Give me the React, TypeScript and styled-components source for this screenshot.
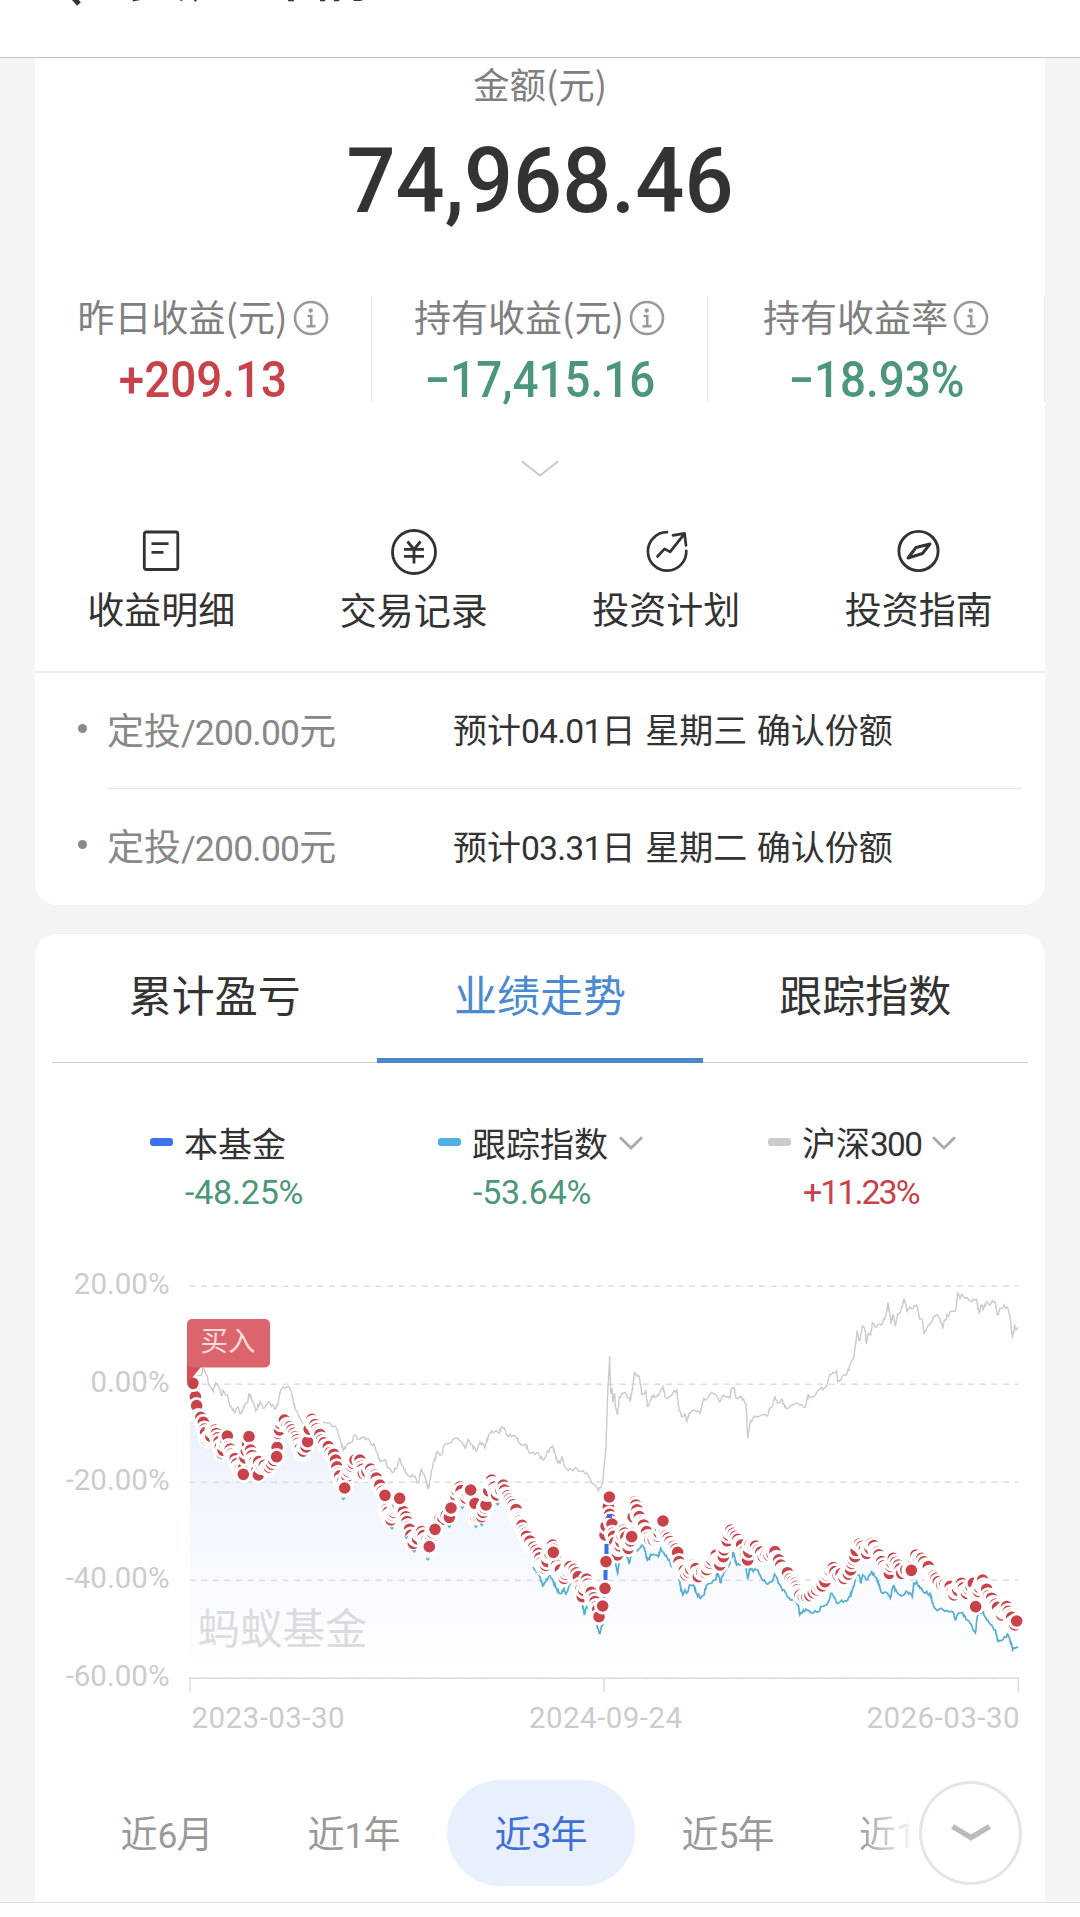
import React from "react";
import styled, { createGlobalStyle, css } from "styled-components";

const GlobalStyle = createGlobalStyle`
  * { box-sizing: border-box; }
  body {
    margin: 0;
    background: #f4f4f4;
    color: #333;
    font-family: "Noto Sans CJK SC", "Noto Sans", sans-serif;
  }
`;

const RED = "#c8424a";
const GREEN = "#4c9679";

const Page = styled.div`
  width: 1080px;
  height: 1917px;
  display: flex;
  flex-direction: column;
  overflow: hidden;
  background: #f4f4f4;
`;

const Header = styled.header`
  height: 58px;
  flex: none;
  display: flex;
  align-items: flex-start;
  gap: 46px;
  padding-left: 54px;
  background: #fff;
  border-bottom: 1px solid #c4c4c4;
  overflow: hidden;
`;

const BackIcon = styled.svg`
  width: 28px;
  height: 52px;
  margin-top: -46px;
`;

const Title = styled.h1`
  margin: -62px 0 0;
  font-size: 61px;
  line-height: 64px;
  font-weight: 500;
`;

const Card = styled.section<{ $part: "top" | "bottom" }>`
  margin: 0 35px;
  background: #fff;
  flex: none;
  display: flex;
  flex-direction: column;
  ${(p) =>
    p.$part === "top"
      ? css`height: 847px; border-radius: 0 0 22px 22px;`
      : css`height: 968px; margin-top: 29px; border-radius: 22px 22px 0 0;`}
`;

const Num = styled.span<{ $scale?: number; $gap?: number }>`
  font-family: Roboto, "Liberation Sans", sans-serif;
  font-size: ${(p) => p.$scale ?? 0.96}em;
  letter-spacing: ${(p) => p.$gap ?? -0.8}px;
`;

const Caption = styled.div`
  height: 54px;
  text-align: center;
  color: #7f7f7f;
  font-size: 36.5px;
  line-height: 52px;
`;

const Amount = styled.div`
  height: 184px;
  text-align: center;
  font: 500 90px/139px Roboto, sans-serif;
  transform: scaleX(0.96);
`;

const Stats = styled.div`
  display: grid;
  grid-template-columns: 337px 336px 337px;
  height: 105px;
  margin-top: 2px;
`;

const Stat = styled.div`
  display: flex;
  flex-direction: column;
  align-items: center;
  border-right: 1px solid #e8e8e8;
`;

const StatLabel = styled.div`
  display: flex;
  align-items: center;
  gap: 5px;
  height: 42px;
  color: #7f7f7f;
  font-size: 37px;
  line-height: 38px;
  white-space: nowrap;
`;

const LabelText = styled.span`
  height: 42px;
`;

const StatValue = styled.div<{ $color: string }>`
  height: 63px;
  color: ${(p) => p.$color};
  font: 500 49.5px/82px Roboto, sans-serif;
  transform: scaleX(0.925);
`;

const Expand = styled.div`
  height: 126px;
  display: flex;
  justify-content: center;
  padding-top: 58px;
`;

const Actions = styled.nav`
  display: grid;
  grid-template-columns: repeat(4, 1fr);
  height: 146px;
  border-bottom: 2px solid #ededed;
`;

const Action = styled.div<{ $drop?: number }>`
  display: flex;
  flex-direction: column;
  align-items: center;
  gap: 4px;
  font-size: 37px;
  line-height: 60px;
  padding-top: ${(p) => p.$drop ?? 0}px;
`;

const Plan = styled.div`
  display: flex;
  align-items: center;
  height: 116px;
  margin: 0 23px 0 43px;
`;

const Bullet = styled.i`
  width: 9px;
  height: 9px;
  margin: -5px 20px 0 0;
  border-radius: 50%;
  background: #8a8a8a;
`;

const PlanBody = styled.div<{ $line?: boolean }>`
  flex: 1;
  height: 116px;
  display: flex;
  align-items: center;
  padding-bottom: 4px;
  border-bottom: ${(p) => (p.$line ? "1px solid #e4e4e4" : "0")};
`;

const PlanName = styled.span`
  width: 346px;
  color: #888;
  font-size: 37px;
`;

const PlanDate = styled.span`
  font-size: 34px;
  word-spacing: 2px;
  white-space: nowrap;
`;

const Tabs = styled.div`
  display: grid;
  grid-template-columns: repeat(3, 1fr);
  height: 129px;
  margin: 0 17px;
  border-bottom: 1px solid #cfcfcf;
`;

const Tab = styled.div<{ $active?: boolean }>`
  height: 129px;
  text-align: center;
  font-size: 43px;
  line-height: 118px;
  color: ${(p) => (p.$active ? "#4a8bd0" : "#333")};
  border-bottom: ${(p) => (p.$active ? "5px solid #4a8ac8" : "0")};
`;

const Legend = styled.div`
  display: grid;
  grid-template-columns: 288px 330px 1fr;
  height: 180px;
  padding: 55px 0 0 115px;
`;

const LegendItem = styled.div`
  display: grid;
  grid-template-columns: 34px auto;
  grid-template-rows: 49px 50px;
  align-items: center;
  justify-content: start;
`;

const Swatch = styled.i<{ $color: string }>`
  width: 23px;
  height: 8px;
  margin-top: -2px;
  border-radius: 3px;
  background: ${(p) => p.$color};
`;

const LegendName = styled.div`
  display: flex;
  align-items: center;
  gap: 11px;
  font-size: 34px;
  line-height: 49px;
`;

const LegendValue = styled.div<{ $color: string; $gap?: number }>`
  grid-column: 2;
  padding-left: 1px;
  color: ${(p) => p.$color};
  font: 400 34px/52px Roboto, sans-serif;
  letter-spacing: ${(p) => p.$gap ?? -0.2}px;
`;

const ChartSvg = styled.svg`
  display: block;
  width: 1010px;
  height: 508px;
  flex: none;
`;

const AxisText = styled.text`
  font: 400 29.5px Roboto, sans-serif;
  fill: #ccc;
`;

const Ranges = styled.div`
  position: relative;
  display: flex;
  height: 106px;
  margin: 29px 0 0 38px;
  overflow: hidden;
`;

const Range = styled.div<{ $active?: boolean }>`
  width: 188px;
  margin-right: -1px;
  flex: none;
  border-radius: 53px;
  text-align: center;
  font-size: 37px;
  line-height: 104px;
  color: ${(p) => (p.$active ? "#3f6fd6" : "#999")};
  background: ${(p) => (p.$active ? "#e8f0fd" : "transparent")};
`;

const RangeCut = styled.div`
  width: 96px;
  padding-left: 38px;
  overflow: hidden;
  white-space: nowrap;
  font-size: 37px;
  line-height: 104px;
  background: linear-gradient(90deg, #999 38%, #fff 100%);
  background-clip: text;
  -webkit-background-clip: text;
  color: transparent;
`;

const More = styled.div`
  position: absolute;
  left: 846px;
  top: 1px;
  width: 103px;
  height: 104px;
  border: 3px solid #e5e5e5;
  border-radius: 50%;
  background: #fff;
  display: flex;
  align-items: center;
  justify-content: center;
`;

const Footer = styled.footer`
  flex: 1;
  border-top: 1px solid #dedede;
  background: #fdfdfd;
`;

const InfoIcon = () => (
  <svg width="36" height="36" viewBox="0 0 36 36" fill="none" stroke="#999" strokeWidth="2.6">
    <circle cx="18" cy="18" r="16" />
    <circle cx="17.8" cy="10.5" r="2.2" fill="#999" stroke="none" />
    <path d="M14.5 16h3.7v10M13.5 26.3h9" />
  </svg>
);

const Caret = () => (
  <svg width="24" height="14" viewBox="0 0 24 14" fill="none" stroke="#aaa" strokeWidth="2.8">
    <path d="M1 1.2 12 12 23 1.2" />
  </svg>
);

const actionIcons = [
  <svg key="a" width="46" height="46" viewBox="0 0 46 46" fill="none" stroke="#333" strokeWidth="2.8">
    <rect x="6.3" y="4" width="33.5" height="37.5" rx="2" />
    <path d="M13.5 15.7h17M13.5 24.4h12" />
  </svg>,
  <svg key="b" width="46" height="46" viewBox="0 0 46 46" fill="none" stroke="#333" strokeWidth="2.8">
    <circle cx="23" cy="23" r="21.5" />
    <path d="m16.5 12.5 6.5 8 6.5-8M23 20.5v14M13 20.3h20M13 27.3h20" />
  </svg>,
  <svg key="c" width="46" height="46" viewBox="0 0 46 46" fill="none" stroke="#333" strokeWidth="2.7" strokeLinecap="round" strokeLinejoin="round">
    <path d="M24 4.2A19.2 19.2 0 1 0 43.3 22.8" />
    <path d="m14.5 28.5 7-7.6 5.6 3L41 6.3M30 7.3l11.5-2 1.5 12" />
  </svg>,
  <svg key="d" width="46" height="46" viewBox="0 0 46 46" fill="none" stroke="#333" strokeWidth="2.9" strokeLinejoin="round">
    <circle cx="22.5" cy="23" r="19.6" />
    <path d="M34 16 26.5 25.5 12 30l8-10.5z" />
  </svg>,
];

/* Chart geometry: traces are sampled in three strips, each on a 3x grid. */
type Pt = [number, number];
const strip = (left: number, flat: number[]): Pt[] => {
  const out: Pt[] = [];
  for (let i = 0; i < flat.length; i += 2) out.push([left + flat[i] / 3, 1260 + flat[i + 1] / 3]);
  return out;
};

const csi: Pt[] = [
  ...strip(40, [455,365,470,350,485,345,489,325,500,345,507,375,520,395,527,368,535,378,545,405,550,392,562,405,572,440,583,458,592,442,603,460,615,432,622,428,628,402,640,430,647,452,660,425,672,445,687,425,705,448,714,430,722,388,730,380,742,380,755,400,765,445,780,475,790,495,818,492,845,490,860,488,885,498,895,520,910,572,925,548,935,545,945,525]),
  ...strip(360, [0,538,12,530,30,545,45,560,60,605,75,600,85,625,97,638,112,620,119,595,130,620,143,645,162,650,175,668,185,628,195,655,206,685,215,630,232,575,245,583,250,560,265,550,278,540,292,535,305,545,316,565,325,538,335,552,348,574,360,545,375,563,385,528,395,512,418,520,425,500,433,503,440,525,455,530,470,535,485,555,497,552,510,580,530,578,548,600,560,580,578,558,590,600,600,612,606,590,615,622,640,632,650,625,665,635,680,640,690,655,700,670,715,692,728,670,733,610,738,560,743,400,749,292,752,400,757,385,758,425,764,400,766,440,773,462,778,410,790,400,800,405,810,425,816,395,824,335,838,350,846,405,857,392,863,440,880,405,890,410,900,395,909,380,915,410,930,408,950,390,957,450,965,470,975,462,980,487,987,460,1005,452,1020,460,1028,425,1045,410,1060,400]),
  ...strip(700, [50,408,60,425,70,405,90,415,94,385,102,383,108,415,120,410,138,430,140,470,143,535,150,490,160,472,185,465,202,468,210,445,218,435,225,410,232,430,245,418,258,445,275,435,295,430,315,442,325,405,335,412,355,390,378,380,390,345,410,332,413,365,430,345,440,342,450,315,460,295,466,260,471,215,479,243,488,198,496,215,499,252,505,220,512,225,517,188,530,200,545,195,558,165,564,130,574,190,580,165,586,198,594,160,602,155,612,118,622,155,630,140,640,145,650,135,660,175,667,178,672,222,680,205,695,185,708,165,720,178,728,203,735,180,750,155,767,152,773,100,780,115,786,102,795,115,815,125,830,118,837,162,845,135,850,150,860,125,868,135,877,122,885,125,893,165,902,145,912,135,925,148,930,170,937,235,944,195,948,210,955,205]),
];

const tracked: Pt[] = [
  ...strip(360, [520,920,535,940,548,978,567,945,580,965,590,985,597,1000,605,1000,612,985,618,1002,632,970,648,998,665,1020,673,1062,680,1040,685,1045,700,1060,710,1090,718,1120,730,1088,737,905,748,720,756,830,765,900,773,940,778,905,795,870,807,912,815,880,850,855,862,900,875,885,885,885,895,890,902,865,912,880,925,900,937,922,955,940,962,985,968,1005,975,990,980,1000,990,975,1000,975,1010,1000,1022,1015,1032,1005]),
  ...strip(700, [20,975,35,970,45,960,52,940,62,968,72,935,85,920,100,878,110,915,125,910,138,920,143,958,150,920,160,935,170,930,180,945,200,972,215,965,226,940,235,970,250,990,262,1010,275,1020,295,1035,299,1065,318,1048,335,1058,355,1055,365,1040,380,1035,393,1000,405,1015,415,1030,435,1022,450,1010,458,985,470,945,478,945,482,968,488,945,500,960,515,935,530,955,540,985,550,1000,560,998,571,1015,580,978,590,995,610,1005,622,995,637,1010,641,970,650,965,660,985,675,1000,690,1000,700,1035,712,1052,730,1050,745,1055,758,1055,765,1078,775,1060,788,1058,800,1080,810,1090,826,1118,832,1070,840,1060,850,1055,860,1080,875,1095,885,1110,895,1145,910,1138,922,1122,930,1140,938,1170,945,1165,955,1162]),
];

/* Small dips of the tracked index that show under the markers. */
const dips: Pt[] = [
  ...strip(40, [910, 716, 1056, 804]),
  ...strip(360, [139, 832, 163, 873, 203, 897, 268, 799, 307, 742, 348, 799, 365, 794, 413, 732]),
];

const fund: Pt[] = [
  ...strip(40, [459,370,466,410,470,437,475,470,490,487,500,540,525,510,545,580,562,528,566,560,580,590,607,640,627,530,632,570,640,600,655,645,656,605,682,625,708,590,715,520,725,478,750,500,767,530,785,580,803,545,812,475,820,490,845,540,865,560,887,600,895,640,912,680,925,635,945,600]),
  ...strip(360, [0,600,10,640,32,627,45,645,53,672,73,702,75,745,93,780,119,717,130,755,145,800,160,850,185,815,205,855,222,808,240,775,268,772,273,744,295,680,312,715,330,692,345,730,348,775,365,770,378,735,382,700,395,660,410,705,430,675,437,705,465,745,475,775,490,812,515,860,535,880,553,925,578,855,590,915,612,955,630,920,655,950,667,1010,680,957,690,990,705,1025,717,1070]),
];
const fundLate: Pt[] = [
  ...strip(360, [735,825,745,740,756,792,757,820,772,885,790,810,805,865,815,830,824,726,838,770,855,812,870,840,890,835,909,785,912,820,930,845,953,877,957,905,978,945,1000,915,1015,950]),
  ...strip(700, [15,937,35,900,45,880,60,915,70,890,72,870,78,850,93,810,100,820,120,850,143,900,150,855,175,870,190,890,225,875,230,895,255,935,285,970,300,1005,320,1010,350,990,375,965,380,945,395,922,405,935,432,955,452,930,455,910,465,890,472,848,500,880,515,850,528,870,545,905,568,940,580,895,595,915,605,940,630,931,648,885,665,895,685,920,695,945,715,965,745,975,762,1005,785,970,800,1000,820,970,827,1030,830,1000,848,960,855,985,880,1030,905,1065,920,1040,930,1065,945,1095]),
];

/* Isolated purchases drawn over the rest. */
const solid: Pt[] = [
  ...strip(40, [459, 370, 610, 643, 710, 590, 914, 684]),
  ...strip(360, [75, 706, 119, 715, 208, 860, 225, 808, 273, 744, 332, 690, 580, 877, 728, 1038, 735, 985, 738, 905, 748, 711, 909, 783]),
  ...strip(700, [634, 931, 827, 1040, 950, 1083]),
];

let seed = 11;
const rand = () => {
  seed = (seed * 16807) % 2147483647;
  return seed / 2147483647 - 0.5;
};

const sample = (pts: Pt[], noise: number, count: (dx: number, dy: number) => number): Pt[] => {
  const out: Pt[] = [];
  for (let i = 0; i < pts.length - 1; i++) {
    const [x0, y0] = pts[i];
    const [x1, y1] = pts[i + 1];
    const n = Math.max(1, Math.round(count(x1 - x0, y1 - y0)));
    for (let k = 0; k < n; k++) {
      const t = k / n;
      const j = k === 0 ? 0 : noise;
      out.push([x0 + (x1 - x0) * t, y0 + (y1 - y0) * t + rand() * j]);
    }
  }
  out.push(pts[pts.length - 1]);
  return out;
};

const byLength = (dx: number, dy: number) => Math.hypot(dx, dy) / 1.8;
const byDay = (dx: number, dy: number) => Math.min(dx / 1.3, Math.hypot(dx, dy) / 3.6);

const toPath = (pts: Pt[]) => "M" + pts.map(([x, y]) => `${x.toFixed(1)} ${y.toFixed(1)}`).join("L");

const csiPath = toPath(sample(csi, 4, byLength));
const trackedPath = toPath(sample(tracked, 4, byLength));
const markers = [...sample(fund, 5, byDay), ...sample(fundLate, 5, byDay)];
const areaPath = toPath([[190, 1384], ...fund, ...fundLate]) + "L1018 1678L190 1678Z";

const Marker = ({ at }: { at: Pt }) => (
  <circle cx={at[0]} cy={at[1]} r="7.2" fill={RED} stroke="#fff" strokeWidth="2.8" />
);

const levels: [string, number][] = [
  ["20.00%", 1286.2],
  ["0.00%", 1384.3],
  ["-20.00%", 1482.2],
  ["-40.00%", 1580.3],
  ["-60.00%", 1678.3],
];

const Chart = () => (
  <ChartSvg viewBox="35 1243 1010 508">
    <defs>
      <linearGradient id="area" gradientUnits="userSpaceOnUse" x1="0" y1="1384" x2="0" y2="1678">
        <stop offset="0" stopColor="#e9f0fd" />
        <stop offset="0.55" stopColor="#f5f8fe" />
        <stop offset="1" stopColor="#ffffff" />
      </linearGradient>
    </defs>
    <path d={areaPath} fill="url(#area)" />
    {levels.map(([label, y]) => (
      <g key={label}>
        <path d={`M189.5 ${y}H1018`} stroke="#dedede" strokeWidth="1.5" strokeDasharray="6 5.62" />
        <AxisText x="169.5" y={y + 8} textAnchor="end">{label}</AxisText>
      </g>
    ))}
    <path d="M190 1692V1678.3H1018.3V1692M604 1678V1692" fill="none" stroke="#dcdcdc" strokeWidth="1.4" />
    <text x="197.5" y="1644" fontSize="42.5" fill="#dcdce0" fontFamily="Noto Sans CJK SC">蚂蚁基金</text>
    <path d={csiPath} fill="none" stroke="#cbcbcb" strokeWidth="1.4" />
    <path d={trackedPath} fill="none" stroke="#55aed2" strokeWidth="1.7" />
    {markers.map((m, i) => <Marker key={i} at={m} />)}
    {dips.map(([x, y]) => (
      <path key={x} d={`M${x - 1.5} ${y - 1}l1.5 2 1.5-2`} fill="none" stroke="#55aed2" strokeWidth="1.3" />
    ))}
    {solid.map((m, i) => <Marker key={i} at={m} />)}
    <path d="M607 1516h5M606.5 1544v10M605.5 1570v10" fill="none" stroke="#3b6fe8" strokeWidth="4" />
    <path d="M187 1363H204L189 1382H187Z" fill="#d64f58" />
    <rect x="187" y="1319" width="83" height="48.5" rx="5" fill="#dc656d" />
    <text x="200.5" y="1350.5" fontSize="27.5" fill="#fbdcdc" fontFamily="Noto Sans CJK SC">买入</text>
    <AxisText x="191.5" y="1727.5" textLength="153">2023-03-30</AxisText>
    <AxisText x="529" y="1727.5" textLength="153">2024-09-24</AxisText>
    <AxisText x="866.5" y="1727.5" textLength="153">2026-03-30</AxisText>
  </ChartSvg>
);

const stats = [
  { label: "昨日收益(元)", value: "+209.13", color: RED },
  { label: "持有收益(元)", value: "−17,415.16", color: GREEN },
  { label: "持有收益率", value: "−18.93%", color: GREEN },
];

const actions = ["收益明细", "交易记录", "投资计划", "投资指南"];

const plans = [
  { date: "04.01", day: "三" },
  { date: "03.31", day: "二" },
];

export default function App() {
  return (
    <Page>
      <GlobalStyle />
      <Header>
        <BackIcon viewBox="0 0 28 52" fill="none" stroke="#333" strokeWidth="5">
          <path d="M25 2 3 26l22 24" />
        </BackIcon>
        <Title>资产详情</Title>
      </Header>

      <Card $part="top">
        <Caption>金额(元)</Caption>
        <Amount>74,968.46</Amount>
        <Stats>
          {stats.map((s) => (
            <Stat key={s.label}>
              <StatLabel>
                <LabelText>{s.label}</LabelText>
                <InfoIcon />
              </StatLabel>
              <StatValue $color={s.color}>{s.value}</StatValue>
            </Stat>
          ))}
        </Stats>
        <Expand>
          <svg width="38" height="18" viewBox="0 0 38 18" fill="none" stroke="#c8c8c8" strokeWidth="1.8">
            <path d="M1 1.5 19 15.5 37 1.5" />
          </svg>
        </Expand>
        <Actions>
          {actions.map((a, i) => (
            <Action key={a} $drop={i === 1 ? 1 : 0}>
              {actionIcons[i]}
              {a}
            </Action>
          ))}
        </Actions>
        {plans.map((p, i) => (
          <Plan key={p.date}>
            <Bullet />
            <PlanBody $line={i === 0}>
              <PlanName>定投<Num>/200.00</Num>元</PlanName>
              <PlanDate>预计<Num $scale={0.99}>{p.date}</Num>日 星期{p.day} 确认份额</PlanDate>
            </PlanBody>
          </Plan>
        ))}
      </Card>

      <Card $part="bottom">
        <Tabs>
          <Tab>累计盈亏</Tab>
          <Tab $active>业绩走势</Tab>
          <Tab>跟踪指数</Tab>
        </Tabs>
        <Legend>
          <LegendItem>
            <Swatch $color="#3b73ee" />
            <LegendName>本基金</LegendName>
            <LegendValue $color={GREEN}>-48.25%</LegendValue>
          </LegendItem>
          <LegendItem>
            <Swatch $color="#4fb0e6" />
            <LegendName>跟踪指数<Caret /></LegendName>
            <LegendValue $color={GREEN}>-53.64%</LegendValue>
          </LegendItem>
          <LegendItem>
            <Swatch $color="#ccc" />
            <LegendName><span>沪深<Num $scale={0.98} $gap={-1.6}>300</Num></span><Caret /></LegendName>
            <LegendValue $color={RED} $gap={-2}>+11.23%</LegendValue>
          </LegendItem>
        </Legend>
        <Chart />
        <Ranges>
          <Range>近<Num>6</Num>月</Range>
          <Range>近<Num>1</Num>年</Range>
          <Range $active>近<Num>3</Num>年</Range>
          <Range>近<Num>5</Num>年</Range>
          <RangeCut>近<Num>1</Num></RangeCut>
          <More>
            <svg width="40" height="22" viewBox="0 0 40 22" fill="none" stroke="#bbb" strokeWidth="5.5">
              <path d="M1.5 4.5 20 15.5 38.5 4.5" />
            </svg>
          </More>
        </Ranges>
      </Card>
      <Footer />
    </Page>
  );
}
